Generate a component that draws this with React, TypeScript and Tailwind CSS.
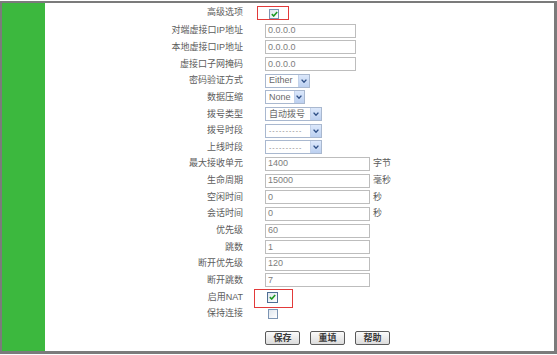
import React from "react";

const Check = () => (
  <svg width="7" height="6" viewBox="0 0 7 6" className="block">
    <path d="M0.8 3.2 L2.7 5 L6.2 0.9" fill="none" stroke="#1f9a24" strokeWidth="1.6" />
  </svg>
);

const Checkbox = ({ checked, big }: { checked?: boolean; big?: boolean }) => (
  <div
    className={
      "flex items-center justify-center border bg-gradient-to-br from-[#dfe6ee] to-[#ffffff] " +
      (big ? "w-[11px] h-[11px] border-[#4f6e94]" : "w-[10px] h-[10px] border-[#7c94b3]")
    }
  >
    {checked ? <Check /> : null}
  </div>
);

const TextBox = ({ value, w }: { value: string; w: string }) => (
  <div className={"h-[14px] border border-[#bdbdbd] bg-white flex items-center px-[2px] text-[9px] text-[#7d7d7d] leading-none " + w}>
    {value}
  </div>
);

const Select = ({ value, w, dashes }: { value: string; w: string; dashes?: boolean }) => (
  <div className={"h-[14px] border border-[#a9b8cf] bg-white flex items-stretch " + w}>
    <div className={"flex-1 flex items-center px-[3px] leading-none " + (dashes ? "text-[7px] text-[#8a8a8a] tracking-[1px]" : "text-[9px] text-[#6a6a6a]")}>
      {value}
    </div>
    <div className="w-[11px] bg-gradient-to-b from-[#dce8fb] to-[#bcd0f0] border-l border-[#c3d2ea] flex items-center justify-center">
      <svg width="6" height="4" viewBox="0 0 6 4" className="block">
        <path d="M0.6 0.6 L3 3.2 L5.4 0.6" fill="none" stroke="#2e4f86" strokeWidth="1.4" />
      </svg>
    </div>
  </div>
);

const Row = ({ label, children, first }: { label: string; children: React.ReactNode; first?: boolean }) => (
  <div className={"flex items-center " + (first ? "h-[19.5px]" : "h-[16.65px]")}>
    <div className="w-[198px] text-right text-[9px] leading-none text-[#5c5c5c]">{label}</div>
    <div className="ml-[22px] flex items-center gap-[3px]">{children}</div>
  </div>
);

const Unit = ({ t }: { t: string }) => <span className="text-[9px] leading-none text-[#5c5c5c]">{t}</span>;

const Btn = ({ t }: { t: string }) => (
  <div className="w-[35px] h-[14px] rounded-[2px] border border-[#5a5a5a] bg-gradient-to-b from-[#fbfbfb] to-[#dcdcdc] flex items-center justify-center text-[9px] leading-none text-[#3a3a3a] font-semibold">
    {t}
  </div>
);

export default function App() {
  return (
    <div className="w-[557px] h-[355px] bg-white pt-[1px] font-['Liberation_Sans','Noto_Sans_CJK_SC',sans-serif]">
      <div className="h-[353px] border-t-2 border-l-2 border-r-[3px] border-b-[3px] border-[#7b7b7b] flex">
        <div className="w-[43px] bg-[#3cb83e]" />
        <div className="flex-1 flex flex-col">
          <Row label="高级选项" first>
            <div className="relative ml-[4px] mt-[2px]">
              <Checkbox checked />
              <div className="absolute left-[-12px] top-[-3px] w-[32px] h-[14px] border border-[#e23a3a]" />
            </div>
          </Row>
          <Row label="对端虚接口IP地址"><TextBox value="0.0.0.0" w="w-[91px]" /></Row>
          <Row label="本地虚接口IP地址"><TextBox value="0.0.0.0" w="w-[91px]" /></Row>
          <Row label="虚接口子网掩码"><TextBox value="0.0.0.0" w="w-[91px]" /></Row>
          <Row label="密码验证方式"><Select value="Either" w="w-[45px]" /></Row>
          <Row label="数据压缩"><Select value="None" w="w-[40px]" /></Row>
          <Row label="拨号类型"><Select value="自动拨号" w="w-[57px]" /></Row>
          <Row label="拨号时段"><Select value="----------" w="w-[57px]" dashes /></Row>
          <Row label="上线时段"><Select value="----------" w="w-[57px]" dashes /></Row>
          <Row label="最大接收单元"><TextBox value="1400" w="w-[105px]" /><Unit t="字节" /></Row>
          <Row label="生命周期"><TextBox value="15000" w="w-[105px]" /><Unit t="毫秒" /></Row>
          <Row label="空闲时间"><TextBox value="0" w="w-[105px]" /><Unit t="秒" /></Row>
          <Row label="会话时间"><TextBox value="0" w="w-[105px]" /><Unit t="秒" /></Row>
          <Row label="优先级"><TextBox value="60" w="w-[105px]" /></Row>
          <Row label="跳数"><TextBox value="1" w="w-[105px]" /></Row>
          <Row label="断开优先级"><TextBox value="120" w="w-[105px]" /></Row>
          <Row label="断开跳数"><TextBox value="7" w="w-[105px]" /></Row>
          <Row label="启用NAT">
            <div className="relative ml-[2px]">
              <Checkbox checked big />
              <div className="absolute left-[-13px] top-[-3px] w-[39px] h-[19px] border border-[#e23a3a]" />
            </div>
          </Row>
          <Row label="保持连接">
            <div className="ml-[3px]"><Checkbox /></div>
          </Row>
          <div className="flex gap-[10px] ml-[220px] mt-[9px]">
            <Btn t="保存" />
            <Btn t="重填" />
            <Btn t="帮助" />
          </div>
        </div>
      </div>
    </div>
  );
}
